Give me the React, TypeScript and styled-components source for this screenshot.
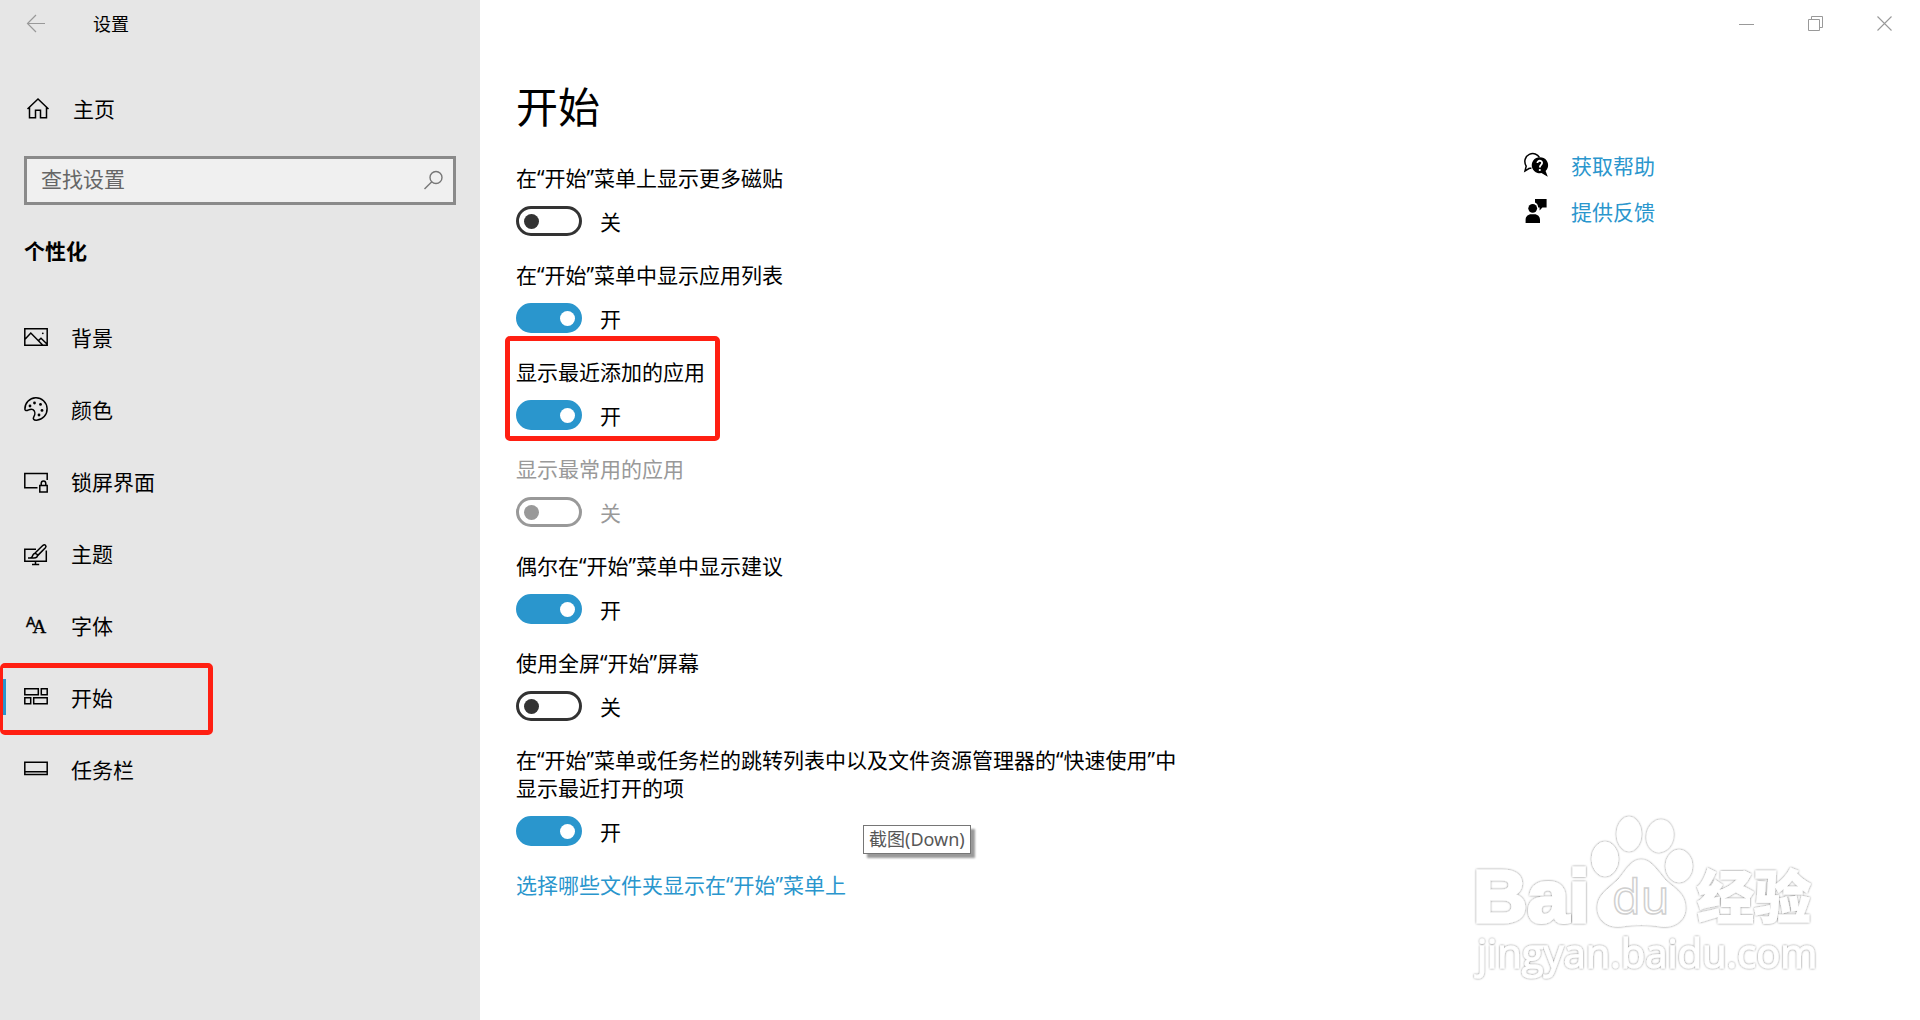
import React, { useId, useState } from "react";
import styled, { createGlobalStyle, css } from "styled-components";

const ACCENT = "#2a96cd";
const MARK = "#ff1f12";

const GlobalStyle = createGlobalStyle`
  *, *::before, *::after { box-sizing: border-box; }
  body {
    margin: 0;
    background: #fff;
    color: #000;
    font-family: "Noto Sans", "Noto Sans CJK SC", sans-serif;
    font-size: 21px;
    line-height: 28px;
  }
  button, input { font: inherit; color: inherit; }
  h1, h2, p, ul { margin: 0; padding: 0; }
`;

const Window = styled.div`
  position: relative;
  display: flex;
  min-height: 100vh;
`;

/* ---------- sidebar ---------- */

const Sidebar = styled.aside`
  flex: 0 0 25%;
  min-width: 320px;
  background: #e6e6e6;
`;

const TitleBar = styled.header`
  display: flex;
  align-items: center;
  height: 48px;
  padding-left: 24px;
  gap: 45px;
  font-size: 18px;
`;

const IconButton = styled.button`
  display: flex;
  align-items: center;
  justify-content: center;
  padding: 0;
  border: 0;
  background: none;
  color: #999;
`;

const HomeLink = styled.a`
  display: flex;
  align-items: center;
  gap: 23px;
  height: 72px;
  margin-top: 25px;
  padding-left: 26px;
  color: inherit;
  text-decoration: none;
`;

const SearchBox = styled.div`
  position: relative;
  margin: 11px 24px 0;
`;

const SearchInput = styled.input`
  display: block;
  width: 100%;
  height: 49px;
  padding: 0 48px 4px 14px;
  border: 3px solid #8a8a8a;
  border-radius: 0;
  outline: 0;
  background: #f0f0f0;
  &::placeholder { color: #666; opacity: 1; }
`;

const SearchButton = styled(IconButton)`
  position: absolute;
  top: 12px;
  right: 11px;
  color: #777;
`;

const SectionTitle = styled.h2`
  margin: 32px 24px 38px;
  font-size: 21px;
  font-weight: 700;
  line-height: 28px;
`;

const NavList = styled.ul`
  list-style: none;
`;

const NavItem = styled.li`
  position: relative;
`;

const NavLink = styled.a<{ $active?: boolean }>`
  position: relative;
  display: flex;
  align-items: center;
  gap: 23px;
  height: 72px;
  padding: 0 0 2px 24px;
  color: inherit;
  text-decoration: none;
  svg { margin-bottom: 2px; }
  ${(p) =>
    p.$active &&
    css`
      &::before {
        content: "";
        position: absolute;
        left: 0;
        top: 16px;
        width: 6px;
        height: 36px;
        background: ${ACCENT};
      }
    `}
`;

const Highlight = styled.div<{ $inset: string; $width: string; $edge?: number }>`
  position: absolute;
  inset: ${(p) => p.$inset};
  width: ${(p) => p.$width};
  border: 5px solid ${MARK};
  border-left-width: ${(p) => p.$edge ?? 5}px;
  border-radius: 5px;
  pointer-events: none;
`;

/* ---------- main ---------- */

const Main = styled.main`
  flex: 1;
  min-width: 0;
  display: flex;
  flex-direction: column;
`;

const WindowControls = styled.div`
  display: flex;
  justify-content: flex-end;
  height: 48px;
  padding-right: 1px;
  ${IconButton} { width: 69px; }
`;

const Columns = styled.div`
  display: flex;
  padding: 31px 36px 0;
`;

const Settings = styled.section`
  flex: 0 1 1008px;
`;

const PageTitle = styled.h1`
  margin-bottom: 29px;
  font-size: 42px;
  font-weight: 400;
  line-height: 56px;
`;

const Setting = styled.div<{ $disabled?: boolean }>`
  position: relative;
  max-width: 672px;
  margin-bottom: 25px;
  color: ${(p) => (p.$disabled ? "#999" : "inherit")};
`;

const SettingLabel = styled.label`
  display: block;
  margin-bottom: 14px;
`;

const SwitchRow = styled.div`
  display: flex;
  align-items: center;
  gap: 18px;
  height: 30px;
`;

const SwitchState = styled.span`
  padding-top: 2px;
`;

const Switch = styled.input`
  appearance: none;
  display: flex;
  align-items: center;
  width: 66px;
  height: 30px;
  margin: 0;
  padding: 0 4px 0 5px;
  border: 3px solid #333;
  border-radius: 15px;
  color: #333;
  &::before {
    content: "";
    width: 15px;
    height: 15px;
    border-radius: 50%;
    background: currentColor;
  }
  &:checked {
    justify-content: flex-end;
    border-color: ${ACCENT};
    background: ${ACCENT};
    color: #fff;
  }
  &:disabled {
    border-color: #999;
    color: #999;
  }
`;

const TextLink = styled.a`
  color: ${ACCENT};
  text-decoration: none;
`;

const Help = styled.nav`
  display: flex;
  flex-direction: column;
  gap: 18px;
  padding-top: 73px;
`;

const HelpLink = styled(TextLink)`
  display: flex;
  align-items: center;
  gap: 23px;
  white-space: nowrap;
  svg { color: #000; margin-bottom: 2px; }
`;

const Tooltip = styled.div`
  position: absolute;
  left: 863px;
  top: 825px;
  padding: 1px 5px 2px;
  border: 1px solid #767676;
  background: #fff;
  box-shadow: 4px 4px 2px rgba(0, 0, 0, 0.4);
  color: #575757;
  font-size: 18px;
  line-height: 24px;
`;

const Watermark = styled.svg`
  position: absolute;
  right: 90px;
  bottom: 30px;
  width: 360px;
  height: 180px;
  pointer-events: none;
`;

/* ---------- icons ---------- */

const Icon = ({ children, size = 24, sw = 1.5 }: { children: React.ReactNode; size?: number; sw?: number }) => (
  <svg width={size} height={size} viewBox={`0 0 ${size} ${size}`} fill="none" stroke="currentColor" strokeWidth={sw} overflow="visible" aria-hidden="true">
    {children}
  </svg>
);

const icons = {
  back: (
    <Icon sw={1.2}>
      <path d="M21 11.5H3.5M12 3L3.5 11.5L12 20" />
    </Icon>
  ),
  home: (
    <Icon>
      <path d="M1.5 12L12 2L22.5 12M3.5 10.5V20.8H9.5V13.2H14.5V20.8H20.5V10.5" />
    </Icon>
  ),
  search: (
    <Icon sw={1.4}>
      <circle cx="15" cy="9.5" r="6" />
      <path d="M10.8 13.8L3.5 21" />
    </Icon>
  ),
  picture: (
    <Icon>
      <path d="M.8 3.8H23.2V20.3H.8ZM.8 14.4L6.8 8L18.6 20M14.4 15.6L17 13.2L23.2 19.2" />
      <circle cx="18.8" cy="8.3" r=".9" fill="currentColor" stroke="none" />
    </Icon>
  ),
  palette: (
    <Icon>
      <path d="M.9 12.3A11.1 11.2 0 1 1 12.6 23.2C9.6 23.4 8.6 21.8 9.8 19.8C11.4 17.2 11.2 14.2 9 12.7C6.6 11.3 4.8 13.2 3.2 13.5C1.8 13.7 .9 13.4 .9 12.3Z" />
      <g fill="currentColor" stroke="none">
        <circle cx="6" cy="9" r="1.4" />
        <circle cx="10.5" cy="6" r="1.4" />
        <circle cx="16.5" cy="7.4" r="1.4" />
        <circle cx="18" cy="13.4" r="1.4" />
        <circle cx="15" cy="18" r="1.4" />
      </g>
    </Icon>
  ),
  lock: (
    <Icon>
      <path d="M13.5 18.8H.8V4.5H23.2V11M15.8 16.5H23.2V23H15.8ZM17.2 16.5V14.6A2.3 2.6 0 0 1 21.8 14.6V16.5" />
    </Icon>
  ),
  theme: (
    <Icon>
      <path d="M12 8.2H.8V20.3H22.3V9.5M11.5 20.3V23.2M8 23.4H15.2M4 17H9.8C12.4 17 14 15.7 13.3 13.8C12.6 12.2 9.7 12 8.9 14C8.4 15.5 8.2 16.8 6.2 17M10.8 12.3L19 4.3C20.8 2.8 23 4.8 21.4 6.7L13.6 14.6" />
    </Icon>
  ),
  fonts: (
    <Icon>
      <g fill="currentColor" stroke="currentColor" strokeWidth=".4">
        <text x="2" y="14" fontFamily="Liberation Sans, sans-serif" fontSize="14">A</text>
        <text x="8.5" y="20" fontFamily="Liberation Serif, serif" fontSize="19">A</text>
      </g>
    </Icon>
  ),
  start: (
    <Icon>
      <path d="M.8 3.8H14.3V9.8H.8ZM17.3 3.8H23.2V9.8H17.3ZM.8 12.8H6.7V18.8H.8ZM9.7 12.8H23.2V18.8H9.7Z" />
    </Icon>
  ),
  taskbar: (
    <Icon>
      <path d="M.8 5.3H23.2V17.6H.8ZM.8 14.7H23.2" />
    </Icon>
  ),
  help: (
    <Icon>
      <path d="M7.4 15.4C6 15.1 5.1 14.8 4 16.2L1 18L2.2 13.2C-.6 8.5 1.2 3.2 5.3 1.4C9.5 -.4 13.6 1.1 15.4 4.4" />
      <path d="M21.6 18L23.8 23.7L17.4 20.1A8.2 8 0 1 1 21.6 18Z" fill="currentColor" stroke="none" />
      <path d="M13.4 10.1C13.4 6.9 18.2 7.1 18.1 10C18 12 15.8 12 15.8 14.4" stroke="#fff" strokeWidth="1.8" />
      <circle cx="15.8" cy="17" r="1.1" fill="#fff" stroke="none" />
    </Icon>
  ),
  feedback: (
    <Icon>
      <g fill="currentColor" stroke="none">
        <circle cx="8.7" cy="9.3" r="4.4" />
        <path d="M1.6 24V20.8C1.6 17.6 4 15.2 7.2 15.2H10.4C13.6 15.2 16 17.6 16 20.8V24ZM11 0H22.6V8.4H18.4L15.6 11.4V8.4H14.2C14 5.6 12.9 4.3 11 3.4Z" />
      </g>
    </Icon>
  ),
  minimize: (
    <Icon size={16} sw={1}>
      <path d="M0 8.5H15" />
    </Icon>
  ),
  restore: (
    <Icon size={16} sw={1}>
      <path d="M.5 3.5H11.5V14.5H.5ZM3.5 3.5V.5H14.5V11.5H11.5" />
    </Icon>
  ),
  close: (
    <Icon size={16} sw={1.1}>
      <path d="M.5 .5L14.5 14.5M14.5 .5L.5 14.5" />
    </Icon>
  ),
};

/* ---------- data ---------- */

const navItems = [
  { icon: icons.picture, text: "背景" },
  { icon: icons.palette, text: "颜色" },
  { icon: icons.lock, text: "锁屏界面" },
  { icon: icons.theme, text: "主题" },
  { icon: icons.fonts, text: "字体" },
  { icon: icons.start, text: "开始", active: true },
  { icon: icons.taskbar, text: "任务栏" },
];

const settings = [
  { text: "在“开始”菜单上显示更多磁贴", on: false },
  { text: "在“开始”菜单中显示应用列表", on: true },
  { text: "显示最近添加的应用", on: true, marked: true },
  { text: "显示最常用的应用", on: false, disabled: true },
  { text: "偶尔在“开始”菜单中显示建议", on: true },
  { text: "使用全屏“开始”屏幕", on: false },
  { text: "在“开始”菜单或任务栏的跳转列表中以及文件资源管理器的“快速使用”中显示最近打开的项", on: true },
];

type SettingProps = { text: string; on: boolean; disabled?: boolean; marked?: boolean };

function ToggleSetting({ text, on, disabled, marked }: SettingProps) {
  const id = useId();
  const [checked, setChecked] = useState(on);
  return (
    <Setting $disabled={disabled}>
      <SettingLabel htmlFor={id}>{text}</SettingLabel>
      <SwitchRow>
        <Switch id={id} type="checkbox" role="switch" checked={checked} disabled={disabled} onChange={(e) => setChecked(e.target.checked)} />
        <SwitchState>{checked ? "开" : "关"}</SwitchState>
      </SwitchRow>
      {marked && <Highlight $inset="-22px auto -11px -11px" $width="215px" />}
    </Setting>
  );
}

function BaiduWatermark() {
  const pad = "M53 0C62 0 67 8 76 19C84 28 97 32 97 48C97 62 84 68 72 66C61 64 46 64 34 66C20 68 9 60 10 46C11 33 22 29 32 18C39 9 44 0 53 0Z";
  return (
    <Watermark viewBox="0 0 360 180" role="img" aria-label="Baidu 经验">
      <defs>
        <filter id="glow" x="-5%" y="-5%" width="110%" height="110%">
          <feDropShadow dx="0" dy="0" stdDeviation="1.3" floodColor="#000" floodOpacity=".55" />
        </filter>
      </defs>
      <g filter="url(#glow)" fill="#fff" stroke="#fff" strokeWidth="1">
        <text x="3" y="112" fontFamily="Liberation Sans, sans-serif" fontWeight="700" fontSize="75" strokeWidth="3">Bai</text>
        <ellipse cx="135" cy="49" rx="13" ry="17" />
        <ellipse cx="159" cy="24" rx="12" ry="17" />
        <ellipse cx="190" cy="26" rx="13" ry="16" transform="rotate(10 190 26)" />
        <ellipse cx="209" cy="56" rx="13" ry="16" />
        <path d={pad} transform="translate(118 50)" />
        <text x="227" y="108" fontFamily="Noto Sans CJK SC, sans-serif" fontWeight="900" fontSize="57">经验</text>
        <text x="7" y="158" fontFamily="Open Sans, sans-serif" fontSize="40">jingyan.baidu.com</text>
      </g>
      <text x="142" y="104" fontFamily="Open Sans, sans-serif" fontSize="47" fill="#fff" stroke="#d0d0d0" strokeWidth="1.5">du</text>
    </Watermark>
  );
}

export default function App() {
  return (
    <Window>
      <GlobalStyle />
      <Sidebar>
        <TitleBar>
          <IconButton aria-label="返回">{icons.back}</IconButton>
          <span>设置</span>
        </TitleBar>
        <HomeLink href="#">
          {icons.home}
          <span>主页</span>
        </HomeLink>
        <SearchBox>
          <SearchInput type="text" placeholder="查找设置" aria-label="查找设置" />
          <SearchButton aria-label="搜索">{icons.search}</SearchButton>
        </SearchBox>
        <SectionTitle>个性化</SectionTitle>
        <NavList>
          {navItems.map((item) => (
            <NavItem key={item.text}>
              <NavLink href="#" $active={item.active}>
                {item.icon}
                <span>{item.text}</span>
              </NavLink>
              {item.active && <Highlight $inset="0 auto 0 0" $width="213px" $edge={3} />}
            </NavItem>
          ))}
        </NavList>
      </Sidebar>
      <Main>
        <WindowControls>
          <IconButton aria-label="最小化">{icons.minimize}</IconButton>
          <IconButton aria-label="还原">{icons.restore}</IconButton>
          <IconButton aria-label="关闭">{icons.close}</IconButton>
        </WindowControls>
        <Columns>
          <Settings>
            <PageTitle>开始</PageTitle>
            {settings.map((s) => (
              <ToggleSetting key={s.text} {...s} />
            ))}
            <TextLink href="#">选择哪些文件夹显示在“开始”菜单上</TextLink>
          </Settings>
          <Help>
            <HelpLink href="#">
              {icons.help}
              <span>获取帮助</span>
            </HelpLink>
            <HelpLink href="#">
              {icons.feedback}
              <span>提供反馈</span>
            </HelpLink>
          </Help>
        </Columns>
      </Main>
      <Tooltip role="tooltip">截图(Down)</Tooltip>
      <BaiduWatermark />
    </Window>
  );
}
